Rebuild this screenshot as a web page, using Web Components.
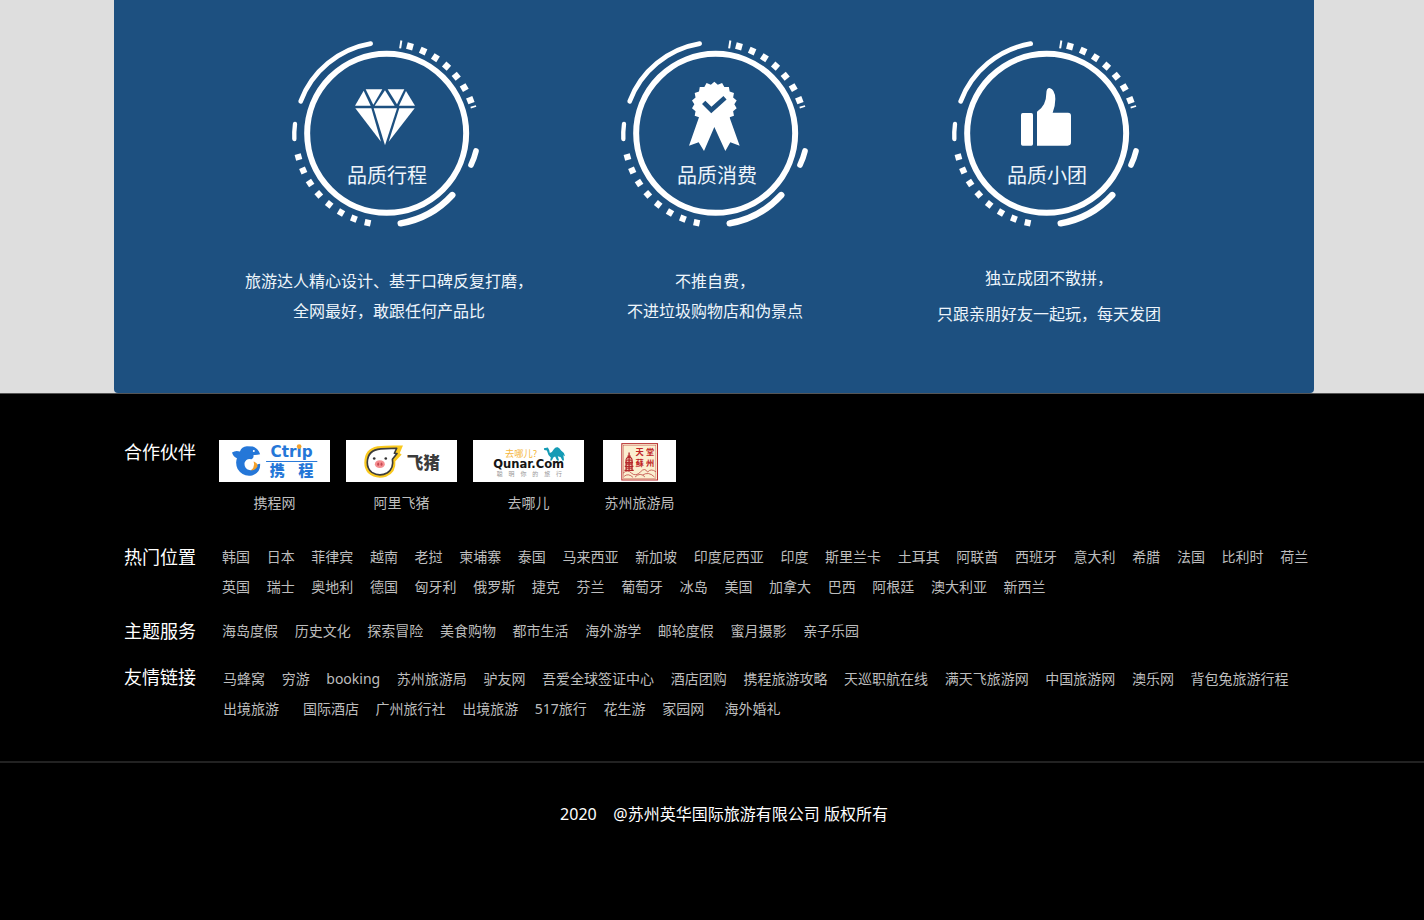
<!DOCTYPE html>
<html lang="zh-CN">
<head>
<meta charset="utf-8">
<meta name="viewport" content="width=device-width, initial-scale=1">
<title>苏州英华国际旅游</title>
<style>
body { margin: 0; background: #000; font-family: "Noto Sans", "Noto Sans CJK SC", sans-serif; }
</style>
</head>
<body>
<quality-band>
  <quality-card kind="diamond" label="品质行程" wide>旅游达人精心设计、基于口碑反复打磨，<br>全网最好，敢跟任何产品比</quality-card>
  <quality-card kind="medal" label="品质消费">不推自费，<br>不进垃圾购物店和伪景点</quality-card>
  <quality-card kind="thumb" label="品质小团" wide loose>独立成团不散拼，<br>只跟亲朋好友一起玩，每天发团</quality-card>
</quality-band>
<site-footer>
  <footer-row label="合作伙伴" class="partners">
    <partner-logo kind="ctrip">携程网</partner-logo>
    <partner-logo kind="fliggy">阿里飞猪</partner-logo>
    <partner-logo kind="qunar">去哪儿</partner-logo>
    <partner-logo kind="suzhou">苏州旅游局</partner-logo>
  </footer-row>
  <footer-row label="热门位置" class="places">
    <link-list items="韩国|日本|菲律宾|越南|老挝|柬埔寨|泰国|马来西亚|新加坡|印度尼西亚|印度|斯里兰卡|土耳其|阿联酋|西班牙|意大利|希腊|法国|比利时|荷兰|英国|瑞士|奥地利|德国|匈牙利|俄罗斯|捷克|芬兰|葡萄牙|冰岛|美国|加拿大|巴西|阿根廷|澳大利亚|新西兰"></link-list>
  </footer-row>
  <footer-row label="主题服务" class="services">
    <link-list items="海岛度假|历史文化|探索冒险|美食购物|都市生活|海外游学|邮轮度假|蜜月摄影|亲子乐园"></link-list>
  </footer-row>
  <footer-row label="友情链接" class="friends">
    <link-list items="马蜂窝|穷游|booking|苏州旅游局|驴友网|吾爱全球签证中心|酒店团购|携程旅游攻略|天巡职航在线|满天飞旅游网|中国旅游网|澳乐网|背包兔旅游行程|出境旅游&nbsp;&nbsp;|国际酒店|广州旅行社|出境旅游|517旅行|花生游|家园网&nbsp;|海外婚礼"></link-list>
  </footer-row>
  <span slot="copyright">2020 &nbsp;&nbsp;&nbsp;@苏州英华国际旅游有限公司 版权所有</span>
</site-footer>

<script>
const define = (name, render) => customElements.define(name, class extends HTMLElement {
  constructor() {
    super();
    this.attachShadow({ mode: "open" });
  }
  connectedCallback() {
    this.shadowRoot.innerHTML = render(this);
  }
});

const square = (cx, cy, r, angle, w, h) =>
  `<rect x="${-w / 2}" y="${-r - h / 2}" width="${w}" height="${h}" transform="translate(${cx} ${cy}) rotate(${angle})"/>`;

/* Ring with its orbiting arcs and two runs of square dots */
function ring(cx) {
  const cy = 310;
  let dots = square(cx, cy, 270, 9, 6, 24) + square(cx, cy, 272, 73, 5, 17);
  for (let i = 0; i < 7; i++) dots += square(cx, cy, 270, 15 + i * 8.9, 19, 20);
  for (let i = 0; i < 8; i++) dots += square(cx, cy, 274, -168 + i * 9, 18, 19);
  return `<circle cx="${cx}" cy="${cy}" r="238.5" fill="none" stroke="#fff" stroke-width="18"/>
    <g transform="translate(${cx - 320} 0)" fill="none" stroke="#fff" stroke-linecap="round">
      <path stroke-width="14" d="M272 41A273 273 0 0 0 62 214"/>
      <path stroke-width="13" d="M45 282Q42 305 43 327"/>
      <path stroke-width="17" d="M588 363Q583 384 573 405"/>
      <path stroke-width="19" d="M517 495A273 273 0 0 1 362 580"/>
    </g><g fill="#fff">${dots}</g>`;
}

function medal() {
  let pts = [];
  for (let i = 0; i < 36; i++) {
    const a = i * Math.PI / 18, r = i % 2 ? 60 : 68;
    pts.push((313 + r * Math.sin(a)).toFixed(1) + "," + (223 - r * Math.cos(a)).toFixed(1));
  }
  return `<polygon fill="#fff" points="${pts.join(" ")}"/>
    <path fill="#fff" d="M267 262L237 347L266 337L282 363L313 291L346 363L361 337L389 347L358 260Z"/>
    <path fill="none" stroke="#1d5080" stroke-width="14" d="M281 217L304 240L345 203"/>`;
}

const badges = {
  diamond: ring(320) + `<g fill="#fff">
    <path d="M257 178H307L280 224Z"/><path d="M323 178H373L351 223Z"/>
    <path d="M251 182L272 227H225Z"/><path d="M315 181L344 227H284Z"/><path d="M378 183L405 227H357Z"/>
    <path d="M226 235H274L303 335Z"/><path d="M281 235H351L315 346Z"/><path d="M358 235H404L326 335Z"/></g>`,
  medal: ring(317) + medal(),
  thumb: ring(320) + `<g fill="#fff"><rect x="243" y="249" width="36" height="98" rx="5"/>
    <path d="M291 245Q319 228 319 190Q319 174 329 174Q345 178 346 207Q346 228 338 248H384Q393 248 393 257V337Q393 347 383 347H291Z"/></g>`
};

define("quality-band", () => `
  <style>
    :host { display: block; background: #dedede; padding-left: 4px; border-bottom: 1px solid #555; }
    .panel {
      box-sizing: border-box; max-width: 1200px; margin: 0 auto; padding: 30px 104px 61px 106px;
      background: #1d5080; border-radius: 0 0 4px 4px;
      display: grid; grid-template-columns: repeat(3, 1fr);
    }
  </style>
  <div class="panel"><slot></slot></div>`);

define("quality-card", el => `
  <style>
    :host { display: flex; flex-direction: column; align-items: center; color: #eef5fb; }
    .badge { display: grid; justify-items: center; }
    svg, h3 { grid-area: 1 / 1; }
    svg { display: block; width: 210px; height: 205px; }
    h3 { align-self: end; margin: 0; padding: 0 0 44px 4px; font-size: 20px; line-height: 30px; font-weight: 400; }
    p {
      margin: 0; height: 72px; margin-top: 25px; display: flex; align-items: center;
      text-align: center; font-size: 16px; line-height: 30px; white-space: nowrap;
    }
    :host([wide]) p { padding-left: 8px; }
    :host([loose]) p { line-height: 36px; }
  </style>
  <div class="badge">
    <svg viewBox="0 0 630 615" aria-hidden="true">${badges[el.getAttribute("kind")]}</svg>
    <h3>${el.getAttribute("label")}</h3>
  </div>
  <p><span><slot></slot></span></p>`);

define("site-footer", () => `
  <style>
    :host { display: block; background: #000; color: #fff; }
    .inner { padding-left: 4px; }
    .rows { box-sizing: border-box; max-width: 1200px; margin: 0 auto; padding: 46px 0 37px 10px; }
    ::slotted(.partners) { margin-bottom: 24px; }
    ::slotted(.places) { margin-bottom: 14px; }
    ::slotted(.services) { margin-bottom: 16px; }
    .copyright {
      margin: 0; padding: 36px 0 90px 24px; border-top: 2px solid #222;
      text-align: center; font-size: 16px; line-height: 30px;
    }
  </style>
  <div class="inner"><div class="rows"><slot></slot></div></div>
  <p class="copyright"><slot name="copyright"></slot></p>`);

define("footer-row", el => `
  <style>
    :host { display: flex; }
    h2 { flex: none; width: 98px; margin: 0; font-size: 18px; line-height: 30px; font-weight: 400; }
    .content { flex: 1; min-width: 0; display: flex; gap: 16px; }
    :host(.partners) { align-items: flex-start; }
    :host(.partners) h2 { width: 95px; line-height: 24px; }
    :host(.friends) .content { padding: 2px 0 0 1px; }
  </style>
  <h2>${el.getAttribute("label")}</h2>
  <div class="content"><slot></slot></div>`);

define("link-list", el => `
  <style>
    :host { display: block; flex: 1; margin-right: -12px; font-size: 14px; line-height: 30px; color: #bdbdbd; }
    a { display: inline-block; margin-right: 13px; color: inherit; text-decoration: none; white-space: nowrap; }
    a:hover { color: #fff; }
  </style>
  ${el.getAttribute("items").split("|").map(t => `<a href="#">${t}</a>`).join(" ")}`);

const sans = `font-family="'Noto Sans CJK SC', sans-serif"`;
const logos = {
  ctrip: ["27 30 333 127", `
    <path fill="#2577d8" d="M65 68Q76 60 89 65Q94 50 110 49L128 50Q144 56 150 73Q139 76 130 75Q132 85 124 88Q108 84 103 99Q101 116 117 121Q134 124 142 103L150 102Q152 129 126 137Q97 142 82 118Q74 100 80 85Q68 80 65 68Z"/>
    <path fill="#f5a12a" d="M130 95Q143 98 142 110Q136 121 122 122Q136 111 130 95Z"/>
    <circle cx="131" cy="63" r="3" fill="#fff"/>
    <text x="245" y="82" text-anchor="middle" font-family="'DejaVu Sans', sans-serif" font-weight="700" font-size="46" fill="#2577d8">Ctrip</text>
    <circle cx="268" cy="50" r="7" fill="#f5a12a"/>
    <path stroke="#2577d8" stroke-width="3" d="M168 95H323"/>
    <g ${sans} font-weight="900" font-size="46" fill="#2577d8" text-anchor="middle"><text x="202" y="138">携</text><text x="288" y="138">程</text></g>`],
  fliggy: ["408 30 333 127", `
    <path fill="#fac91e" d="M462 99Q462 56 502 49Q536 45 579 47L569 70L575 74L556 94Q559 128 528 141Q496 150 473 130Q462 117 462 99Z"/>
    <path fill="#fff" stroke="#3c3c3c" stroke-width="5" stroke-linejoin="round" d="M471 98Q472 60 512 57L560 55L553 70L561 71L547 88Q552 115 532 129Q508 142 485 128Q471 117 471 98Z"/>
    <ellipse cx="509" cy="103" rx="15" ry="12" fill="#f58f91"/>
    <ellipse cx="504" cy="103" rx="3" ry="5" fill="#c74852"/><ellipse cx="514" cy="103" rx="3" ry="5" fill="#c74852"/>
    <circle cx="492" cy="86" r="4" fill="#333"/><circle cx="527" cy="86" r="4" fill="#333"/>
    <text x="640" y="119" text-anchor="middle" ${sans} font-weight="900" font-size="50" fill="#3c3c3c">飞猪</text>`],
  qunar: ["39 30 333 127", `
    <text x="183" y="80" text-anchor="middle" ${sans} font-size="28" fill="#f5b63c">去哪儿?</text>
    <path fill="#159bb5" d="M252 55L264 53Q269 60 270 69Q278 67 282 58Q287 50 294 52Q300 55 304 62Q312 66 316 79L311 76L313 92H308L303 82Q299 80 294 79L298 92H292L286 80Q280 82 279 86L276 92H271L273 83Q264 76 261 62L253 60Z"/>
    <text x="206" y="114" text-anchor="middle" font-family="'DejaVu Sans', sans-serif" font-weight="700" font-size="35" fill="#151515">Qunar.Com</text>
    <text x="208" y="139" text-anchor="middle" ${sans} font-size="18" fill="#999">聪　明　你　的　旅　行</text>`],
  suzhou: ["429 30 219 127", `
    <rect x="485" y="41" width="108" height="110" fill="#fbefd0" stroke="#b5282b" stroke-width="3"/>
    <rect x="490" y="46" width="98" height="100" fill="none" stroke="#b5282b" stroke-width="1"/>
    <g ${sans} font-weight="700" font-size="25" fill="#c02427" text-anchor="middle"><text x="539" y="74">天</text><text x="571" y="74">堂</text><text x="539" y="108">蘇</text><text x="571" y="108">州</text></g>
    <g fill="none" stroke="#b5282b" stroke-width="4">
      <path d="M507 68V77M502 79H512M498 87L507 80L516 87M500 91H514M495 98H519M499 103H515M494 110H520M498 115H516M493 122H521M498 88V123M507 84V123M516 88V123"/>
      <path stroke-width="2" d="M489 130Q503 118 514 130Q527 142 542 126Q554 112 563 127Q573 115 588 126M492 140Q504 129 519 143M525 142Q541 126 555 142M548 136Q566 124 584 142"/>
    </g>`]
};

define("partner-logo", el => {
  const [box, art] = logos[el.getAttribute("kind")];
  const small = el.getAttribute("kind") === "suzhou";
  return `
  <style>
    :host { display: block; }
    a { display: flex; flex-direction: column; align-items: center; width: ${small ? 79 : 111}px; color: #bdbdbd; text-decoration: none; font-size: 14px; line-height: 30px; white-space: nowrap; }
    svg { display: block; width: ${small ? 73 : 111}px; height: 42px; margin-bottom: 6px; background: #fff; }
  </style>
  <a href="#"><svg viewBox="${box}" aria-hidden="true">${art}</svg><slot></slot></a>`;
});
</script>
</body>
</html>
